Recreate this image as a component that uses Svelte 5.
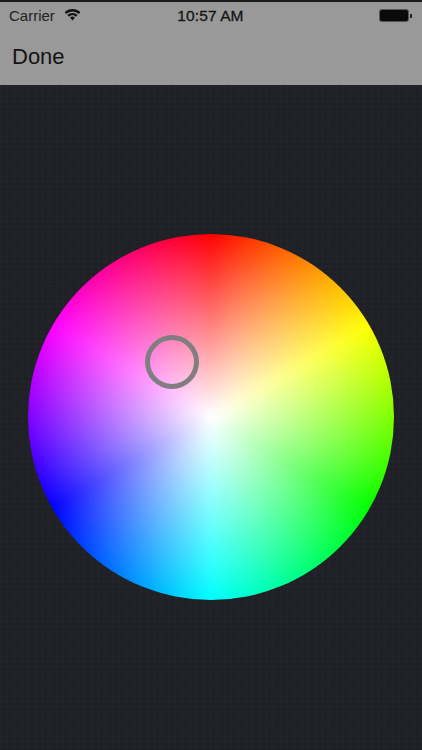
<script>
    // selector position on the wheel, relative to its top left corner
    let wheelSize = 366;
    let knob = { x: 143.5, y: 127.5 };
</script>

<main class="screen">
    <header class="top">
        <div class="status">
            <div class="status-left">
                <span class="carrier">Carrier</span>
                <svg class="wifi" width="17" height="13" viewBox="0 0 16 12">
                    <path d="M0.6 3.9 A10.6 10.6 0 0 1 15.4 3.9 L13.9 5.5 A8.4 8.4 0 0 0 2.1 5.5 Z" fill="#111" />
                    <path d="M3.2 6.5 A7 7 0 0 1 12.8 6.5 L11.3 8 A4.9 4.9 0 0 0 4.7 8 Z" fill="#111" />
                    <path d="M5.7 9 A3.4 3.4 0 0 1 10.3 9 L8 11.6 Z" fill="#111" />
                </svg>
            </div>
            <span class="time">10:57 AM</span>
            <div class="battery">
                <span class="cell"></span>
                <span class="tip"></span>
            </div>
        </div>
        <div class="nav">
            <span class="done">Done</span>
        </div>
    </header>
    <section class="content">
        <div class="wheel" style="width: {wheelSize}px; height: {wheelSize}px;">
            <div class="hue"></div>
            <div class="fade"></div>
            <div class="knob" style="left: {knob.x}px; top: {knob.y}px;"></div>
        </div>
    </section>
</main>

<style>
    :global(body) {
        margin: 0;
        background: #1f2126;
    }

    .screen {
        width: 422px;
        height: 750px;
        display: flex;
        flex-direction: column;
        overflow: hidden;
        font-family: "Liberation Sans", Arial, sans-serif;
    }

    .top {
        height: 85px;
        flex: none;
        box-sizing: border-box;
        background: #999999;
        border-top: 2px solid #1a1a1a;
        color: #141414;
    }

    .status {
        height: 27px;
        display: grid;
        grid-template-columns: 1fr auto 1fr;
        align-items: center;
        padding: 0 9px;
    }

    .status-left {
        display: flex;
        align-items: center;
        gap: 9px;
    }

    .carrier {
        font-size: 15px;
        color: #222;
    }

    .wifi {
        margin-top: -3px;
    }

    .time {
        font-size: 15.5px;
        -webkit-text-stroke: 0.3px #141414;
        letter-spacing: 0.1px;
        margin-left: -1px;
    }

    .battery {
        justify-self: end;
        display: flex;
        align-items: center;
        margin-right: 1px;
    }

    .cell {
        width: 28px;
        height: 11px;
        background: #0a0a0a;
        border-radius: 2px;
        box-shadow: 0 0 0 1px #555;
    }

    .tip {
        width: 2px;
        height: 4px;
        margin-left: 2px;
        background: #222;
    }

    .nav {
        padding: 15px 12px 0;
    }

    .done {
        font-size: 22px;
        line-height: 26px;
    }

    .content {
        flex: 1;
        display: flex;
        justify-content: center;
        padding-top: 149px;
        background-color: #1f2126;
        background-image:
            repeating-linear-gradient(90deg, rgba(255, 255, 255, 0.014) 0 1px, transparent 1px 3px, rgba(0, 0, 0, 0.04) 3px 4px, transparent 4px 7px),
            repeating-linear-gradient(0deg, rgba(0, 0, 0, 0.04) 0 1px, transparent 1px 3px, rgba(255, 255, 255, 0.012) 3px 4px, transparent 4px 5px);
    }

    .wheel {
        position: relative;
        border-radius: 50%;
        flex: none;
        overflow: hidden;
    }

    /* oversized and blurred so the sector seams soften, the wheel clips it */
    .hue {
        position: absolute;
        inset: -16px;
        filter: blur(5px);
        background: conic-gradient(#f00, #ff0 60deg, #0f0 120deg, #0ff 180deg, #00f 240deg, #f0f 300deg, #f00);
    }

    .fade {
        position: absolute;
        inset: 0;
        border-radius: 50%;
        background: radial-gradient(closest-side, #fff, rgba(255, 255, 255, 0));
    }

    /* grey ring, sits over the wheel */
    .knob {
        position: absolute;
        width: 54px;
        height: 54px;
        box-sizing: border-box;
        transform: translate(-50%, -50%);
        border: 5px solid #807e80;
        border-radius: 50%;
    }
</style>
